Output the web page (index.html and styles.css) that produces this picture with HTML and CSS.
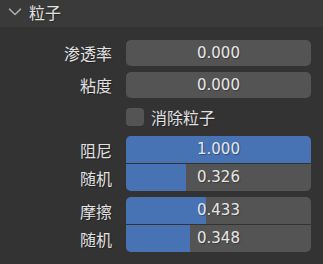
FILE: index.html
```html
<!DOCTYPE html>
<html>
<head>
<meta charset="utf-8">
<link rel="stylesheet" href="styles.css">
</head>
<body>
<div class="panel">
  <div class="header">
    <svg class="chevron" width="14" height="8" viewBox="0 0 14 8"><path d="M1.5 1.2 L7 6.5 L12.5 1.2" fill="none" stroke="#a8a8a8" stroke-width="1.6" stroke-linecap="round" stroke-linejoin="round"/></svg>
    <span class="title">粒子</span>
  </div>
  <div class="content">
    <div class="row">
      <span class="label">渗透率</span>
      <div class="field"><span class="val">0.000</span></div>
    </div>
    <div class="row">
      <span class="label">粘度</span>
      <div class="field"><span class="val">0.000</span></div>
    </div>
    <div class="row">
      <span class="label"></span>
      <div class="check"><span class="box"></span><span class="check-label">消除粒子</span></div>
    </div>
    <div class="group">
      <div class="row grow">
        <span class="label">阻尼</span>
        <div class="field top"><div class="fill" style="width:100%"></div><span class="val">1.000</span></div>
      </div>
      <div class="row grow">
        <span class="label">随机</span>
        <div class="field bottom"><div class="fill" style="width:32.6%"></div><span class="val">0.326</span></div>
      </div>
    </div>
    <div class="group">
      <div class="row grow">
        <span class="label">摩擦</span>
        <div class="field top"><div class="fill" style="width:43.3%"></div><span class="val">0.433</span></div>
      </div>
      <div class="row grow">
        <span class="label">随机</span>
        <div class="field bottom"><div class="fill" style="width:34.8%"></div><span class="val">0.348</span></div>
      </div>
    </div>
  </div>
</div>
</body>
</html>
```

FILE: styles.css
```css
html, body {
  margin: 0;
  padding: 0;
}
body {
  width: 323px;
  height: 264px;
  overflow: hidden;
  background: #333333;
  font-family: "DejaVu Sans", "Noto Sans CJK SC", sans-serif;
  color: #e6e6e6;
}
.panel {
  display: flex;
  flex-direction: column;
}
.header {
  height: 27px;
  background: #3a3a3a;
  display: flex;
  align-items: center;
  padding-left: 8px;
  gap: 7px;
  box-sizing: border-box;
  padding-bottom: 4px;
}
.chevron {
  display: block;
}
.title {
  font-family: "Noto Sans CJK SC", sans-serif;
  font-size: 16px;
  color: #e0e0e0;
  text-shadow: 1px 1px 1px rgba(0,0,0,0.35);
}
.content {
  display: flex;
  flex-direction: column;
  gap: 6px;
  padding-top: 13px;
}
.row {
  display: grid;
  grid-template-columns: 112px 185px;
  column-gap: 14px;
  height: 26px;
  align-items: center;
}
.row.grow {
  height: 27px;
}
.label {
  text-align: right;
  font-family: "Noto Sans CJK SC", sans-serif;
  font-size: 16px;
  line-height: 1;
  color: #e0e0e0;
  text-shadow: 1px 1px 1px rgba(0,0,0,0.35);
}
.field {
  position: relative;
  height: 26px;
  background: #545454;
  border-radius: 5px;
  overflow: hidden;
  display: flex;
  align-items: center;
  justify-content: center;
}
.grow .field {
  height: 27px;
}
.field.top {
  border-radius: 5px 5px 0 0;
}
.field.bottom {
  border-radius: 0 0 5px 5px;
}
.group {
  display: flex;
  flex-direction: column;
  gap: 1px;
  background: #333333;
}
.fill {
  position: absolute;
  left: 0;
  top: 0;
  bottom: 0;
  background: #4772b3;
}
.val {
  position: relative;
  font-size: 15px;
  line-height: 1;
  color: #e6e6e6;
  text-shadow: 1px 1px 1px rgba(0,0,0,0.3);
}
.check {
  display: flex;
  align-items: center;
  gap: 7px;
}
.box {
  width: 18px;
  height: 18px;
  border-radius: 4px;
  background: #545454;
}
.check-label {
  font-family: "Noto Sans CJK SC", sans-serif;
  font-size: 16px;
  line-height: 1;
  color: #e0e0e0;
  text-shadow: 1px 1px 1px rgba(0,0,0,0.35);
}
```
